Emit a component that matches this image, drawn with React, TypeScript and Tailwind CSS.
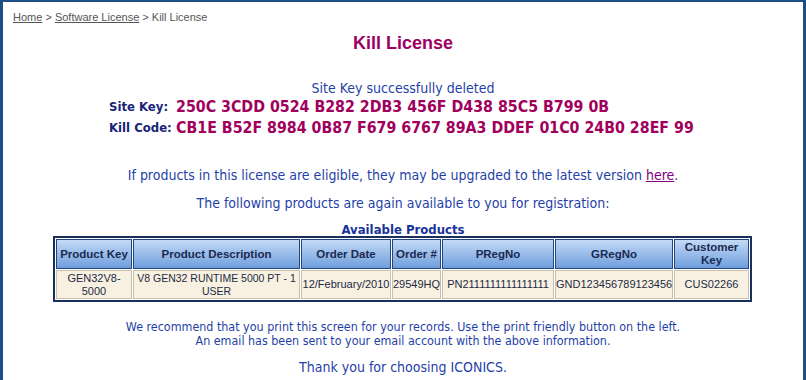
import React from "react";

const cols = [
  { h: "Product Key", w: 76, d: "GEN32V8-5000" },
  { h: "Product Description", w: 167, d: "V8 GEN32 RUNTIME 5000 PT - 1 USER" },
  { h: "Order Date", w: 90, d: "12/February/2010" },
  { h: "Order #", w: 49, d: "29549HQ" },
  { h: "PRegNo", w: 112, d: "PN2111111111111111" },
  { h: "GRegNo", w: 118, d: "GND123456789123456" },
  { h: "Customer Key", w: 75, d: "CUS02266" },
];

export default function App() {
  const tah = { fontFamily: '"DejaVu Sans Condensed", "DejaVu Sans", sans-serif' };
  const ar = { fontFamily: '"Liberation Sans", Arial, sans-serif' };
  return (
    <div className="w-[806px] h-[380px] overflow-hidden bg-white border-t-2 border-l-[3px] border-r-[3px] border-[#1d4f85]">
      <div className="pl-[10px] pt-[8px] text-[11px] leading-[14px] text-[#555]" style={ar}>
        <span className="underline decoration-[#555]">Home</span> &gt;{" "}
        <span className="underline decoration-[#555]">Software License</span> &gt; Kill License
      </div>
      <div className="text-center text-[18px] leading-[22px] font-bold text-[#9c0063] mt-[8px]" style={ar}>
        Kill License
      </div>
      <div className="text-center text-[14px] leading-[16px] text-[#1f3fa8] mt-[26px]" style={tah}>
        Site Key successfully deleted
      </div>
      <div className="pl-[106px]" style={tah}>
        <div className="flex items-center h-[21px]">
          <div className="w-[67px] text-[13px] font-bold text-[#17247a]">Site Key:</div>
          <div className="text-[15.8px] font-bold text-[#a0005c]">250C 3CDD 0524 B282 2DB3 456F D438 85C5 B799 0B</div>
        </div>
        <div className="flex items-center h-[21px]">
          <div className="w-[67px] text-[13px] font-bold text-[#17247a]">Kill Code:</div>
          <div className="text-[15.8px] font-bold text-[#a0005c]">CB1E B52F 8984 0B87 F679 6767 89A3 DDEF 01C0 24B0 28EF 99</div>
        </div>
      </div>
      <div className="text-center text-[14px] leading-[17px] text-[#1f3fa8] mt-[29px]" style={tah}>
        If products in this license are eligible, they may be upgraded to the latest version{" "}
        <span className="underline text-[#800080]">here</span>.
      </div>
      <div className="text-center text-[14px] leading-[17px] text-[#1f3fa8] mt-[11px]" style={tah}>
        The following products are again available to you for registration:
      </div>
      <div className="text-center text-[13px] leading-[12px] font-bold text-[#17339a] mt-[12px]" style={tah}>
        Available Products
      </div>
      <table
        className="ml-[50px] w-[699px] border-2 border-[#1a2f5e] border-separate border-spacing-[1px] table-fixed"
        style={ar}
      >
        <thead>
          <tr>
            {cols.map((c) => (
              <th
                key={c.h}
                style={{ width: c.w }}
                className="h-[30px] p-0 border border-[#24467f] bg-gradient-to-b from-[#c4daf5] to-[#6f9edd] text-[11.5px] leading-[13px] font-bold text-[#1b2a50] text-center"
              >
                {c.h === "Customer Key" ? (
                  <>
                    Customer
                    <br />
                    Key
                  </>
                ) : (
                  c.h
                )}
              </th>
            ))}
          </tr>
        </thead>
        <tbody>
          <tr>
            {cols.map((c, i) => (
              <td
                key={c.h}
                className={
                  "h-[29px] p-0 border border-[#c8c0b0] bg-[#f8f1e1] leading-[13px] text-[#1d2a44] text-center whitespace-nowrap " +
                  (i === 1 ? "text-[10.5px]" : "text-[11px]")
                }
              >
                {i === 0 ? (
                  <>
                    GEN32V8-
                    <br />
                    5000
                  </>
                ) : i === 1 ? (
                  <>
                    V8 GEN32 RUNTIME 5000 PT - 1
                    <br />
                    USER
                  </>
                ) : (
                  c.d
                )}
              </td>
            ))}
          </tr>
        </tbody>
      </table>
      <div className="text-center text-[12.4px] leading-[14px] text-[#1f3fa8] mt-[18px]" style={tah}>
        We recommend that you print this screen for your records. Use the print friendly button on the left.
        <br />
        An email has been sent to your email account with the above information.
      </div>
      <div className="text-center text-[14px] leading-[17px] text-[#1f3fa8] mt-[11px]" style={tah}>
        Thank you for choosing ICONICS.
      </div>
    </div>
  );
}
